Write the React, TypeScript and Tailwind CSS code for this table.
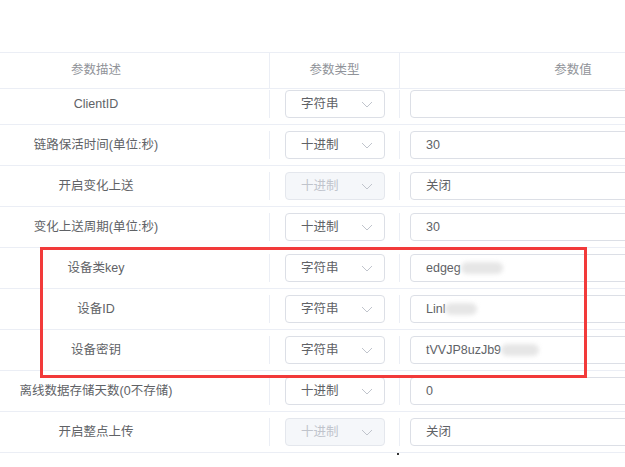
import React from "react";

type Row = {
  label: string;
  type: string;
  disabled?: boolean;
  value: React.ReactNode;
};

const Blur = ({ w }: { w: string }) => (
  <span className={`inline-block h-[12px] ${w} rounded-full bg-[#e6e6e6] blur-[2px] align-middle`} />
);

const rows: Row[] = [
  { label: "ClientID", type: "字符串", value: "" },
  { label: "链路保活时间(单位:秒)", type: "十进制", value: "30" },
  { label: "开启变化上送", type: "十进制", disabled: true, value: "关闭" },
  { label: "变化上送周期(单位:秒)", type: "十进制", value: "30" },
  {
    label: "设备类key",
    type: "字符串",
    value: (
      <>
        edgeg
        <Blur w="w-[42px]" />
      </>
    ),
  },
  {
    label: "设备ID",
    type: "字符串",
    value: (
      <>
        Linl
        <Blur w="w-[32px]" />
      </>
    ),
  },
  {
    label: "设备密钥",
    type: "字符串",
    value: (
      <>
        tVVJP8uzJb9
        <Blur w="w-[38px]" />
      </>
    ),
  },
  { label: "离线数据存储天数(0不存储)", type: "十进制", value: "0" },
  { label: "开启整点上传", type: "十进制", disabled: true, value: "关闭" },
];

const Chevron = () => (
  <svg width="12" height="7" viewBox="0 0 12 7" fill="none">
    <polyline points="1,1 6,6 11,1" stroke="#c0c4cc" strokeWidth="1" />
  </svg>
);

const TypeSelect = ({ text, disabled }: { text: string; disabled?: boolean }) => (
  <div
    className={
      disabled
        ? "ml-[15px] flex h-[28px] w-[100px] items-center justify-between rounded-[4px] border border-[#e4e7ed] bg-[#f5f7fa] pl-[15px] pr-[11px] text-[#c0c4cc]"
        : "ml-[15px] flex h-[28px] w-[100px] items-center justify-between rounded-[4px] border border-[#dcdfe6] bg-white pl-[15px] pr-[11px] text-[#606266]"
    }
  >
    <span>{text}</span>
    <Chevron />
  </div>
);

export default function App() {
  return (
    <div
      className="relative h-[467px] w-[625px] overflow-hidden bg-white text-[12.5px] text-[#606266]"
      style={{ fontFamily: '"Liberation Sans", "Noto Sans CJK SC", sans-serif' }}
    >
      <div className="h-[52px]" />
      <div className="-ml-[77px] w-[1000px]">
        {/* header */}
        <div className="flex h-[37px] border-y border-[#ebeef5] text-[#909399]">
          <div className="flex w-[347px] items-center justify-center border-r border-[#ebeef5]">参数描述</div>
          <div className="flex w-[130px] items-center justify-center border-r border-[#ebeef5]">参数类型</div>
          <div className="flex w-[346px] items-center justify-center">参数值</div>
        </div>

        {rows.map((r, i) => (
          <div
            key={i}
            className={
              i === 0
                ? "flex border-b border-[#ebeef5] pt-[1px] pb-[6px]"
                : "flex border-b border-[#ebeef5] py-[6px]"
            }
          >
            <div className="flex h-[28px] w-[347px] items-center justify-center border-r border-[#ebeef5]">
              {r.label}
            </div>
            <div className="flex h-[28px] w-[130px] items-center border-r border-[#ebeef5]">
              <TypeSelect text={r.type} disabled={r.disabled} />
            </div>
            <div className="flex h-[28px] w-[346px] items-center">
              <div className="ml-[10px] flex h-[28px] w-[326px] items-center rounded-[4px] border border-[#dcdfe6] pl-[15px] text-[#606266]">
                {r.value}
              </div>
            </div>
          </div>
        ))}
      </div>

      {/* highlight box */}
      <div className="absolute left-[40px] top-[247px] h-[131px] w-[547px] border-[3px] border-[#f23a3a]" />
      <div className="absolute left-[397px] top-[453px] h-[2px] w-[2px] bg-[#333]" />
    </div>
  );
}
